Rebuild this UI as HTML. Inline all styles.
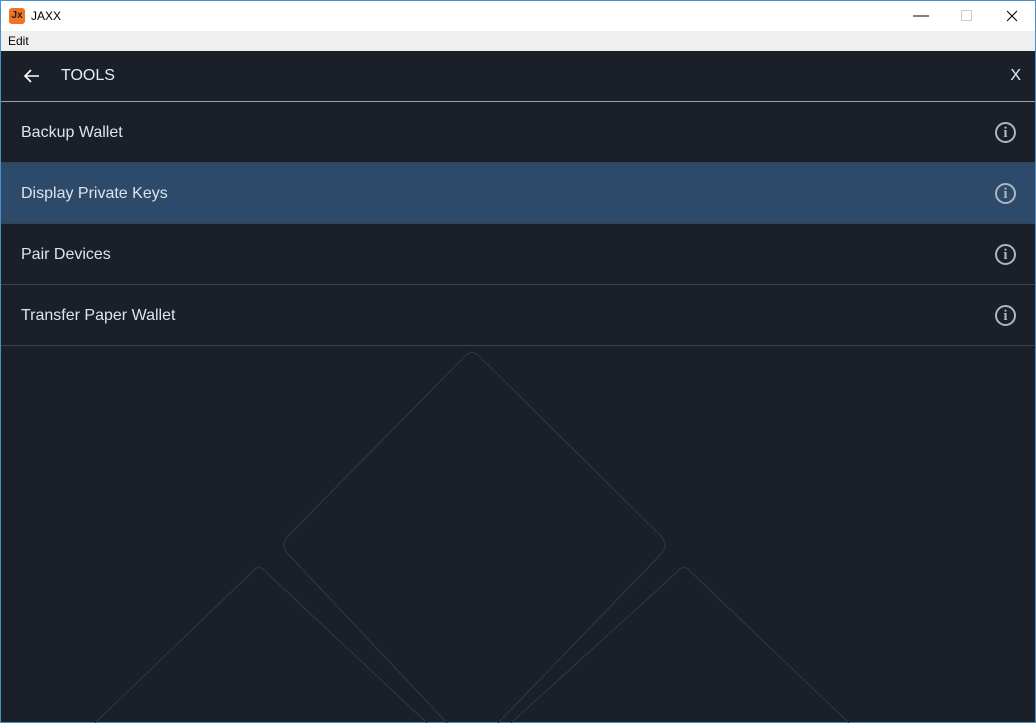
<!DOCTYPE html>
<html><head><style>
*{margin:0;padding:0;box-sizing:border-box}
body{width:1036px;height:723px;overflow:hidden;background:#1a1f28;font-family:"Liberation Sans",sans-serif;position:relative}
.title{position:absolute;left:0;top:0;width:1036px;height:31px;background:#fff;border:1px solid #4a90c8;border-bottom:none}
.logo{position:absolute;left:8px;top:7px;width:16px;height:16px;background:#f07423;border-radius:3px;font-size:10px;color:#222;font-weight:bold;text-align:center;line-height:16px}
.tt{position:absolute;left:30px;top:8px;font-size:12px;color:#000}
.menu{position:absolute;left:0;top:31px;width:1036px;height:20px;background:#efefef;border-left:1px solid #4a90c8;border-right:1px solid #4a90c8;font-size:12px;color:#000;padding:3px 0 0 7px}
.app{position:absolute;left:0;top:51px;width:1036px;height:672px;border-left:1px solid #4a90c8;border-right:1px solid #4a90c8;border-bottom:1px solid #4a90c8}
.hdr{position:absolute;left:0;top:0;width:1034px;height:51px;border-bottom:1px solid #9aa0a8;color:#e8eef4;font-size:16px}
.row{position:absolute;left:0;width:1034px;height:61px;border-bottom:1px solid #3a414e;color:#dde4ec;font-size:16px;padding:22px 0 0 20px}
.row.sel{background:#2d4a6b}
.info{position:absolute;right:19px;top:20px;width:21px;height:21px;border:2px solid #b0b6be;border-radius:50%;color:#b0b6be;font-family:"Liberation Serif",serif;font-size:15px;font-weight:bold;text-align:center;line-height:18px}
svg{position:absolute;left:0;top:0}
</style></head><body>
<div class="title"><div class="logo">Jx</div><div class="tt">JAXX</div>
<svg width="1036" height="31" style="left:-1px"><line x1="913" y1="15" x2="929" y2="15" stroke="#000"/><rect x="961.5" y="9.5" width="10" height="10" fill="none" stroke="#ccc"/><path d="M1007 10L1017 20M1017 10L1007 20" stroke="#000"/></svg>
</div>
<div class="menu">Edit</div>
<div class="app">
<svg width="1034" height="672"><g fill="none" stroke="#2c3342" stroke-width="1.3">
<path d="M462 307Q471 296 480 307L660 485Q668 494 660 503L497 672"/>
<path d="M446 672L287 503Q279 494 287 485L462 307"/>
<path d="M94 672L250 522Q258 511 266 522L426 672"/>
<path d="M510 672L675 522Q683 511 691 522L848 672"/>
</g></svg>
<div class="hdr"><svg width="40" height="51"><path d="M24 25H38M30 19L24 25L30 31" stroke="#fff" stroke-width="1.6" fill="none"/></svg>
<span style="position:absolute;left:60px;top:16px">TOOLS</span><span style="position:absolute;right:14px;top:16px">X</span></div>
<div class="row" style="top:51px">Backup Wallet<div class="info">i</div></div>
<div class="row sel" style="top:112px">Display Private Keys<div class="info">i</div></div>
<div class="row" style="top:173px">Pair Devices<div class="info">i</div></div>
<div class="row" style="top:234px">Transfer Paper Wallet<div class="info">i</div></div>
</div>
</body></html>
